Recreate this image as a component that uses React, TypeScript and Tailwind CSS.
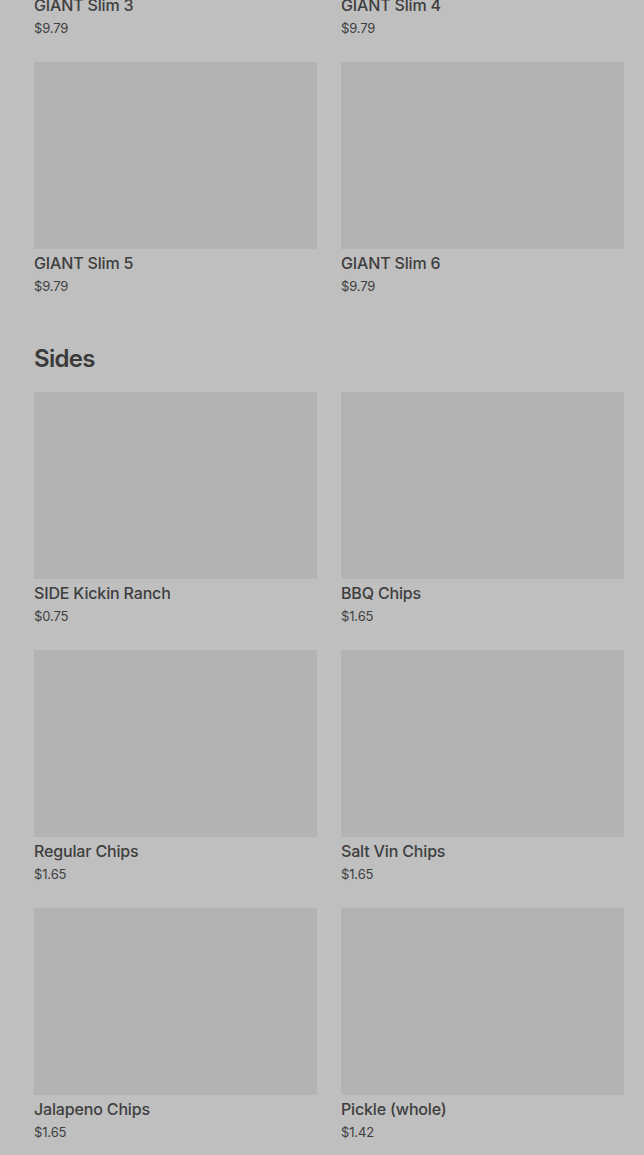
const slims = [
  { name: "GIANT Slim 3", price: "$9.79" },
  { name: "GIANT Slim 4", price: "$9.79" },
  { name: "GIANT Slim 5", price: "$9.79" },
  { name: "GIANT Slim 6", price: "$9.79" },
];

const sides = [
  { name: "SIDE Kickin Ranch", price: "$0.75" },
  { name: "BBQ Chips", price: "$1.65" },
  { name: "Regular Chips", price: "$1.65" },
  { name: "Salt Vin Chips", price: "$1.65" },
  { name: "Jalapeno Chips", price: "$1.65" },
  { name: "Pickle (whole)", price: "$1.42" },
];

type Item = { name: string; price: string };

const MenuCard = ({ item }: { item: Item }) => (
  <div className="flex flex-col">
    <div className="h-[187px] w-full bg-[#b3b3b3]" />
    <p className="mt-[2px] text-[16px] leading-6 font-medium tracking-[-0.01em] text-[#3e3e3e]">
      {item.name}
    </p>
    <p className="mt-[2px] text-[13px] leading-[18px] tracking-[-0.01em] text-[#3e3e3e]">
      {item.price}
    </p>
  </div>
);

const App = () => {
  return (
    <div
      className="min-h-[1155px] overflow-hidden bg-[#bfbfbf] pl-[34px] pr-[20px]"
      style={{ fontFamily: "Inter, 'Liberation Sans', sans-serif" }}
    >
      <div className="-mt-[196px] grid grid-cols-2 gap-x-6 gap-y-[25px]">
        {slims.map((item) => (
          <MenuCard key={item.name} item={item} />
        ))}
      </div>
      <h2 className="mt-[48px] text-[24px] leading-8 font-semibold tracking-[-0.03em] text-[#3b3b3b]">
        Sides
      </h2>
      <div className="mt-[17px] grid grid-cols-2 gap-x-6 gap-y-[25px] pb-10">
        {sides.map((item) => (
          <MenuCard key={item.name} item={item} />
        ))}
      </div>
    </div>
  );
};

export default App;
